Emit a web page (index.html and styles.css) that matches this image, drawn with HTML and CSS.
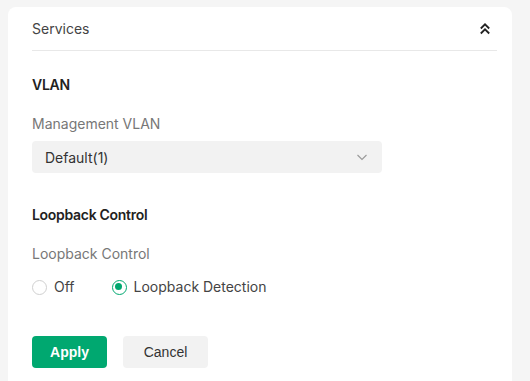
FILE: index.html
```html
<!DOCTYPE html>
<html lang="en">
<head>
  <meta charset="UTF-8">
  <title>Services</title>
  <link rel="stylesheet" href="styles.css">
</head>
<body>
  <div class="card">
    <div class="card-header">
      <span class="card-title">Services</span>
      <svg class="collapse-icon" width="12" height="14" viewBox="0 0 12 14">
        <path d="M1.8 6.5 L6 2.3 L10.2 6.5 M1.8 11.5 L6 7.3 L10.2 11.5" fill="none" stroke="#222" stroke-width="1.8"/>
      </svg>
    </div>

    <div class="section">
      <h3>VLAN</h3>
      <label class="field-label">Management VLAN</label>
      <div class="select">
        <span>Default(1)</span>
        <svg width="14" height="14" viewBox="0 0 14 14">
          <path d="M2.5 5 L7 9.5 L11.5 5" fill="none" stroke="#999" stroke-width="1.1"/>
        </svg>
      </div>
    </div>

    <div class="section">
      <h3>Loopback Control</h3>
      <label class="field-label">Loopback Control</label>
      <div class="radios">
        <label class="radio"><span class="dot"></span>Off</label>
        <label class="radio checked"><span class="dot"></span>Loopback Detection</label>
      </div>
    </div>

    <div class="actions">
      <button class="btn primary">Apply</button>
      <button class="btn">Cancel</button>
    </div>
  </div>
</body>
</html>
```

FILE: styles.css
```css
body {
  margin: 0;
  padding: 7px 18px 0 8px;
  background: #f5f5f5;
  font-family: Inter, "Open Sans", sans-serif;
  font-size: 14px;
  color: #333;
  overflow: hidden;
}

.card {
  background: #fff;
  border-radius: 8px 8px 0 0;
  padding: 0 15px 0 24px;
  height: 374px;
  box-sizing: border-box;
}

.card-header {
  height: 43px;
  display: flex;
  align-items: center;
  justify-content: space-between;
  border-bottom: 1px solid #e8e8e8;
}

.card-title {
  color: #444;
  line-height: 20px;
  padding-top: 1px;
}

.collapse-icon {
  margin-right: 6px;
}

.section h3 {
  margin: 0;
  font-size: 14px;
  font-weight: 600;
  line-height: 20px;
  color: #222;
  letter-spacing: -0.3px;
}

.section {
  padding-top: 24px;
}

.section + .section {
  padding-top: 32px;
}

.field-label {
  display: block;
  margin-top: 19px;
  line-height: 20px;
  color: #777;
}

.select {
  margin-top: 7px;
  width: 350px;
  height: 32px;
  background: #f2f2f2;
  border-radius: 4px;
  display: flex;
  align-items: center;
  justify-content: space-between;
  padding: 0 13px 0 13px;
  box-sizing: border-box;
  color: #333;
}

.radios {
  display: flex;
  gap: 37px;
  margin-top: 13px;
  line-height: 20px;
}

.radio {
  display: flex;
  align-items: center;
  gap: 7px;
  color: #444;
}

.dot {
  width: 15px;
  height: 15px;
  border: 1px solid #d0d0d0;
  border-radius: 50%;
  box-sizing: border-box;
  position: relative;
}

.radio.checked .dot {
  border: 1.5px solid #00a870;
}

.radio.checked .dot::after {
  content: "";
  position: absolute;
  left: 2.5px;
  top: 2.5px;
  width: 7px;
  height: 7px;
  border-radius: 50%;
  background: #00a870;
}

.actions {
  display: flex;
  gap: 16px;
  margin-top: 39px;
}

.btn {
  height: 32px;
  border: none;
  border-radius: 4px;
  background: #f2f2f2;
  color: #333;
  font-family: "Liberation Sans", Arial, sans-serif;
  font-size: 14px;
  width: 85px;
}

.btn.primary {
  width: 75px;
  background: #00a870;
  color: #fff;
  font-weight: bold;
}
```
